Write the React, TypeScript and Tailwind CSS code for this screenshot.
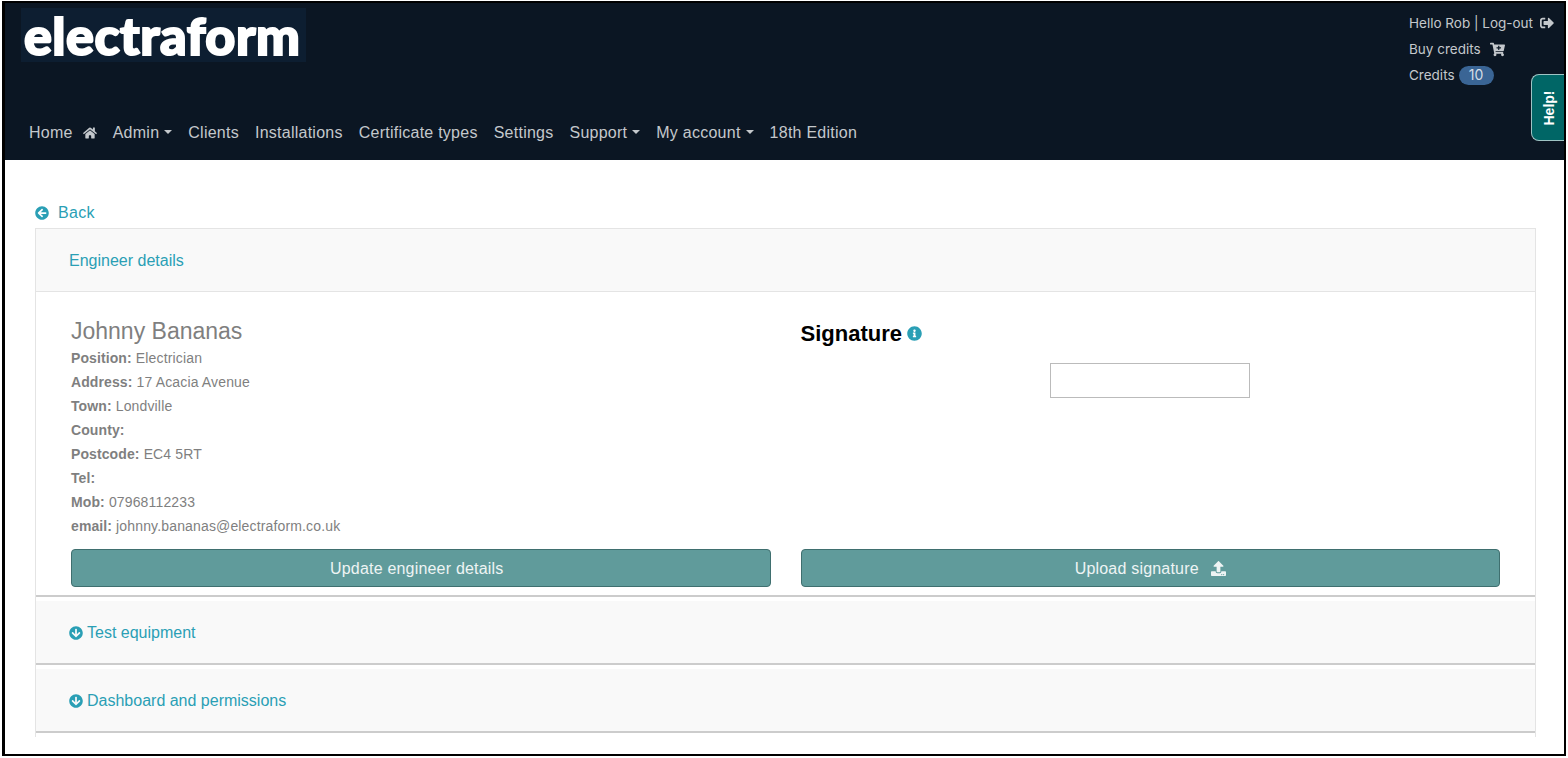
import { FaHome, FaSignOutAlt, FaCartPlus, FaArrowCircleLeft, FaArrowCircleDown, FaInfoCircle, FaUpload } from 'react-icons/fa';

const Caret = () => (
    <span className="ml-[5px] inline-block h-0 w-0 translate-y-[-2px] border-x-[4px] border-t-[4px] border-x-transparent border-t-[#c4c8cc] align-middle" />
);

const Detail = ({ label, value }: { label: string; value?: string }) => (
    <div className="h-6 text-sm leading-6 tracking-[0.15px] text-[#7f7f7f]">
        <b className="font-bold tracking-[0.1px]">{label}</b> {value}
    </div>
);

const Section = ({ title }: { title: string }) => (
    <>
        <div className="flex h-[62px] items-center gap-[4px] bg-[#f9f9f9] pt-[2px] pl-[33px] text-base text-[#2a9fb5]">
            <FaArrowCircleDown className="text-[14px]" />
            {title}
        </div>
        <div className="mb-[4px] h-[2px] bg-[#cccccc]" />
    </>
);

const App = () => {
    const navItems = [
        { label: 'Admin', caret: true },
        { label: 'Clients' },
        { label: 'Installations' },
        { label: 'Certificate types' },
        { label: 'Settings' },
        { label: 'Support', caret: true },
        { label: 'My account', caret: true },
        { label: '18th Edition' },
    ];

    return (
        <div className="h-[758px] w-[1568px] overflow-hidden bg-white pt-[1px] pl-[2px] font-['Liberation_Sans',sans-serif]">
            <div className="h-[755px] w-[1564px] border-y-[2px] border-r-[2px] border-l-[3px] border-black">
                <header className="relative flex h-[157px] justify-between bg-[#0b1623] pl-[2px]">
                    <div className="flex flex-col">
                        <div className="mt-[5px] ml-[14px] flex h-[54px] w-[285px] items-center bg-[#0d1e31] pl-[3px]">
                            <span className="font-['Lato',sans-serif] text-[52px] leading-none font-black tracking-[0.5px] text-white [-webkit-text-stroke:2px_white]">
                                electraform
                            </span>
                        </div>
                        <nav className="mt-[59px] ml-[22px] flex items-center gap-4 text-base leading-6 tracking-[0.25px] text-[#c4c8cc]">
                            <span className="flex items-center gap-[10px]">
                                Home <FaHome className="text-[14px]" />
                            </span>
                            {navItems.map((item) => (
                                <span key={item.label}>
                                    {item.label}
                                    {item.caret && <Caret />}
                                </span>
                            ))}
                        </nav>
                    </div>
                    <div className="mt-[7px] mr-[5px] flex w-[150px] flex-col font-['Inter',sans-serif] text-[13.5px] leading-[26px] text-[#c4c8cc]">
                        <span className="flex items-center">
                            Hello Rob | Log-out <FaSignOutAlt className="ml-[7px] text-[14px]" />
                        </span>
                        <span className="flex items-center">
                            Buy credits <FaCartPlus className="ml-[9px] text-[15px]" />
                        </span>
                        <span className="flex items-center">
                            Credits
                            <span className="ml-[4px] flex h-[19px] w-[35px] items-center justify-center rounded-full bg-[#3a6595] text-sm text-[#d5dde6]">
                                10
                            </span>
                        </span>
                    </div>
                    <div className="absolute top-[71px] right-0 flex h-[67px] w-[33px] items-center justify-center rounded-l-lg border border-r-0 border-[#9fc4c4] bg-[#006666]">
                        <span className="-rotate-90 text-sm font-bold text-white">Help!</span>
                    </div>
                </header>
                <main className="px-[30px] pt-[40px]">
                    <a className="flex h-[28px] items-center pb-[2px] text-base tracking-[0.3px] text-[#2a9fb5]">
                        <FaArrowCircleLeft className="mr-[9px] text-[14px]" />
                        Back
                    </a>
                    <div className="h-[509px] w-[1501px] border-x border-t border-[#e4e4e4]">
                        <div className="flex h-[63px] items-center border-b border-[#e4e4e4] bg-[#f9f9f9] pt-[2px] pl-[33px] text-base text-[#2a9fb5]">
                            Engineer details
                        </div>
                        <div className="grid h-[303px] grid-cols-2 gap-[30px] px-[35px] pt-[25px] pb-[8px]">
                            <div className="flex flex-col">
                                <h2 className="h-[29px] text-[23px] leading-7 text-[#7f7f7f]">Johnny Bananas</h2>
                                <Detail label="Position:" value="Electrician" />
                                <Detail label="Address:" value="17 Acacia Avenue" />
                                <Detail label="Town:" value="Londville" />
                                <Detail label="County:" />
                                <Detail label="Postcode:" value="EC4 5RT" />
                                <Detail label="Tel:" />
                                <Detail label="Mob:" value="07968112233" />
                                <Detail label="email:" value="johnny.bananas@electraform.co.uk" />
                                <button className="mt-[11px] h-[38px] rounded border border-[#3f6f6f] bg-[#609b9b] pt-[1px] pr-[8px] text-base tracking-[0.2px] text-[#eef4f4]">
                                    Update engineer details
                                </button>
                            </div>
                            <div className="flex flex-col">
                                <h2 className="mt-[1px] flex h-[30px] items-center gap-[5px] text-[22px] font-bold text-black">
                                    Signature <FaInfoCircle className="text-[15px] text-[#2a9fb5]" />
                                </h2>
                                <div className="mt-[15px] h-[35px] w-[200px] self-center border border-[#bbbbbb]" />
                                <button className="mt-auto flex h-[38px] items-center justify-center gap-[12px] rounded border border-[#3f6f6f] bg-[#609b9b] pt-[1px] text-base tracking-[0.2px] text-[#eef4f4]">
                                    Upload signature <FaUpload className="text-[15px]" />
                                </button>
                            </div>
                        </div>
                        <div className="mb-[4px] h-[2px] bg-[#cccccc]" />
                        <Section title="Test equipment" />
                        <Section title="Dashboard and permissions" />
                    </div>
                </main>
            </div>
        </div>
    );
};

export default App;
